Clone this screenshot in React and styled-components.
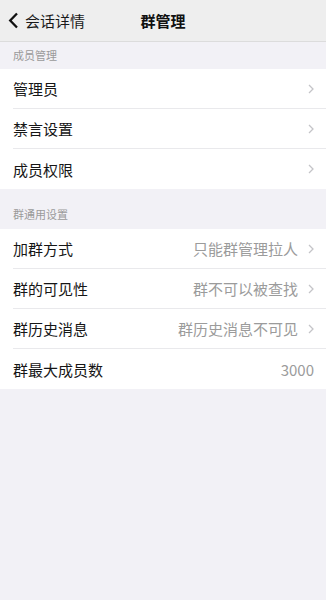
import React from 'react'
import styled, { createGlobalStyle } from 'styled-components'

const GlobalStyle = createGlobalStyle`
  html, body {
    margin: 0;
    padding: 0;
    background: #f2f1f6;
    font-family: "Noto Sans CJK SC", "Liberation Sans", sans-serif;
  }
`;

const Page = styled.div`
  display: flex;
  flex-direction: column;
  width: 326px;
  min-height: 600px;
  background: #f2f1f6;
`;

const NavBar = styled.div`
  display: flex;
  align-items: center;
  height: 42px;
  background: #eeeeee;
  border-bottom: 1px solid #dcdcdc;
  position: relative;
  box-sizing: border-box;
`;

const BackButton = styled.div`
  display: flex;
  align-items: center;
  gap: 6px;
  padding-left: 8px;
  font-size: 15px;
  color: #1a1a1a;
`;

const Title = styled.div`
  position: absolute;
  left: 0;
  right: 0;
  text-align: center;
  font-size: 15px;
  font-weight: bold;
  color: #111;
  pointer-events: none;
`;

const SectionHeader = styled.div`
  display: flex;
  align-items: flex-end;
  height: ${(p) => p.h}px;
  padding: 0 0 ${(p) => p.pb}px 13px;
  box-sizing: border-box;
  font-size: 11px;
  color: #9a9a9a;
`;

const Group = styled.div`
  display: flex;
  flex-direction: column;
  background: #fff;
`;

const Row = styled.div`
  display: flex;
  align-items: center;
  height: 40px;
  margin-left: 13px;
  padding-right: 12px;
  box-sizing: border-box;
  border-bottom: ${(p) => (p.last ? 'none' : '1px solid #e9e9ec')};
`;

const Label = styled.div`
  flex: 1;
  font-size: 15px;
  color: #161616;
`;

const Value = styled.div`
  font-size: 15px;
  color: #9b9b9b;
  margin-right: ${(p) => (p.arrow ? '10px' : '0')};
`;

const Chevron = () => (
  <svg width="6" height="10" viewBox="0 0 6 10">
    <path d="M1 1l4 4-4 4" fill="none" stroke="#c4c4c8" strokeWidth="1.3" />
  </svg>
);

const Back = () => (
  <svg width="11" height="17" viewBox="0 0 11 17">
    <path d="M9 1.5L2.2 8.5 9 15.5" fill="none" stroke="#111" strokeWidth="2.3" />
  </svg>
);

const memberRows = [{ label: '管理员' }, { label: '禁言设置' }, { label: '成员权限' }];

const generalRows = [
  { label: '加群方式', value: '只能群管理拉人', arrow: true },
  { label: '群的可见性', value: '群不可以被查找', arrow: true },
  { label: '群历史消息', value: '群历史消息不可见', arrow: true },
  { label: '群最大成员数', value: '3000', arrow: false },
];

function Section({ rows }) {
  return (
    <Group>
      {rows.map((r, i) => (
        <Row key={r.label} last={i === rows.length - 1}>
          <Label>{r.label}</Label>
          {r.value && <Value arrow={r.arrow !== false}>{r.value}</Value>}
          {r.arrow !== false && <Chevron />}
        </Row>
      ))}
    </Group>
  );
}

export default function App() {
  return (
    <Page>
      <GlobalStyle />
      <NavBar>
        <BackButton>
          <Back />
          会话详情
        </BackButton>
        <Title>群管理</Title>
      </NavBar>
      <SectionHeader h={27} pb={6}>成员管理</SectionHeader>
      <Section rows={memberRows} />
      <SectionHeader h={40} pb={7}>群通用设置</SectionHeader>
      <Section rows={generalRows} />
    </Page>
  );
}
